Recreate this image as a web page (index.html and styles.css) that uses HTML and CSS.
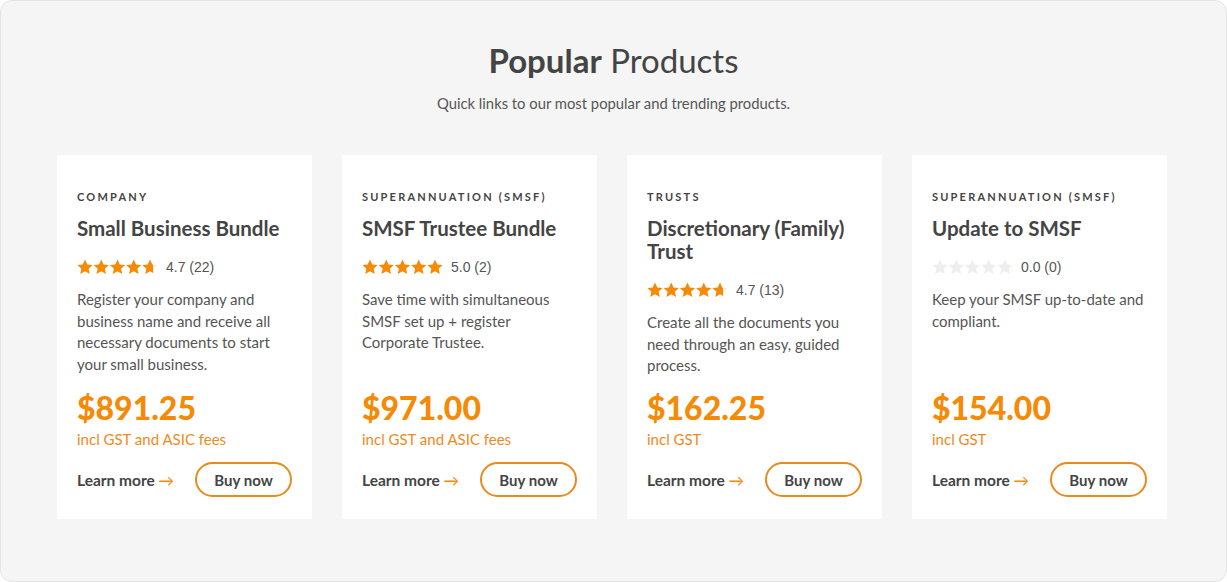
FILE: index.html
```html
<!DOCTYPE html>
<html lang="en">
<head>
<meta charset="utf-8">
<title>Popular Products</title>
<link rel="stylesheet" href="styles.css">
</head>
<body>
<svg class="defs" width="0" height="0" aria-hidden="true">
  <defs>
    <polygon id="star" points="8,0.6 10.3,5.5 15.6,6.1 11.6,9.7 12.8,15 8,12.3 3.2,15 4.4,9.7 0.4,6.1 5.7,5.5"/>
    <linearGradient id="part70" x1="0" x2="1" y1="0" y2="0">
      <stop offset="0.7" stop-color="#f58a07"/>
      <stop offset="0.7" stop-color="#eeeeee"/>
    </linearGradient>
  </defs>
</svg>
<section class="panel">
  <h2 class="heading"><strong>Popular</strong> Products</h2>
  <p class="sub">Quick links to our most popular and trending products.</p>
  <div class="grid">
    <article class="card">
      <div class="cat">Company</div>
      <h3 class="title">Small Business Bundle</h3>
      <div class="rating">
        <svg class="stars" width="81" height="16" viewBox="0 0 81 16"><use href="#star" class="on"/><use href="#star" x="16.25" class="on"/><use href="#star" x="32.5" class="on"/><use href="#star" x="48.75" class="on"/><use href="#star" x="65" fill="url(#part70)"/></svg>
        <span class="score">4.7 (22)</span>
      </div>
      <p class="desc">Register your company and business name and receive all necessary documents to start your small business.</p>
      <div class="price">$891.25</div>
      <div class="note">incl GST and ASIC fees</div>
      <div class="actions"><a class="learn" href="#">Learn more <span class="arrow">→</span></a><a class="buy" href="#">Buy now</a></div>
    </article>
    <article class="card">
      <div class="cat">Superannuation (SMSF)</div>
      <h3 class="title">SMSF Trustee Bundle</h3>
      <div class="rating">
        <svg class="stars" width="81" height="16" viewBox="0 0 81 16"><use href="#star" class="on"/><use href="#star" x="16.25" class="on"/><use href="#star" x="32.5" class="on"/><use href="#star" x="48.75" class="on"/><use href="#star" x="65" class="on"/></svg>
        <span class="score">5.0 (2)</span>
      </div>
      <p class="desc">Save time with simultaneous SMSF set up + register Corporate Trustee.</p>
      <div class="price">$971.00</div>
      <div class="note">incl GST and ASIC fees</div>
      <div class="actions"><a class="learn" href="#">Learn more <span class="arrow">→</span></a><a class="buy" href="#">Buy now</a></div>
    </article>
    <article class="card">
      <div class="cat">Trusts</div>
      <h3 class="title">Discretionary (Family) Trust</h3>
      <div class="rating">
        <svg class="stars" width="81" height="16" viewBox="0 0 81 16"><use href="#star" class="on"/><use href="#star" x="16.25" class="on"/><use href="#star" x="32.5" class="on"/><use href="#star" x="48.75" class="on"/><use href="#star" x="65" fill="url(#part70)"/></svg>
        <span class="score">4.7 (13)</span>
      </div>
      <p class="desc">Create all the documents you need through an easy, guided process.</p>
      <div class="price">$162.25</div>
      <div class="note">incl GST</div>
      <div class="actions"><a class="learn" href="#">Learn more <span class="arrow">→</span></a><a class="buy" href="#">Buy now</a></div>
    </article>
    <article class="card">
      <div class="cat">Superannuation (SMSF)</div>
      <h3 class="title">Update to SMSF</h3>
      <div class="rating">
        <svg class="stars" width="81" height="16" viewBox="0 0 81 16"><use href="#star" class="off"/><use href="#star" x="16.25" class="off"/><use href="#star" x="32.5" class="off"/><use href="#star" x="48.75" class="off"/><use href="#star" x="65" class="off"/></svg>
        <span class="score">0.0 (0)</span>
      </div>
      <p class="desc">Keep your SMSF up-to-date and compliant.</p>
      <div class="price">$154.00</div>
      <div class="note">incl GST</div>
      <div class="actions"><a class="learn" href="#">Learn more <span class="arrow">→</span></a><a class="buy" href="#">Buy now</a></div>
    </article>
  </div>
</section>
</body>
</html>
```
FILE: styles.css
```css
* { box-sizing: border-box; }
html, body { margin: 0; background: #ffffff; }
body { font-family: Lato, "Open Sans", sans-serif; color: #444; }
.defs { position: absolute; width: 0; height: 0; overflow: hidden; }
.panel {
  height: 582px;
  background: #f5f5f5;
  border: 1px solid #e4e4e4;
  border-radius: 12px;
  padding: 38px 56px 0 56px;
}
.heading {
  margin: 0;
  text-align: center;
  font-size: 33px;
  font-weight: 400;
  color: #444;
  line-height: 42px;
}
.heading strong { font-weight: 700; }
.sub {
  margin: 12px 0 0;
  text-align: center;
  font-size: 14.8px;
  color: #555;
  line-height: 20px;
}
.grid {
  display: grid;
  grid-template-columns: repeat(4, 255px);
  gap: 30px;
  margin-top: 42px;
}
.card {
  background: #fff;
  height: 364px;
  padding: 35px 20px 22px;
  display: flex;
  flex-direction: column;
}
.cat {
  font-size: 11px;
  font-weight: 700;
  letter-spacing: 2.2px;
  text-transform: uppercase;
  color: #444;
  line-height: 14px;
}
.title {
  margin: 13px 0 0;
  font-size: 20.5px;
  font-weight: 700;
  line-height: 23px;
  color: #444;
}
.rating {
  display: flex;
  align-items: center;
  margin-top: 18px;
  height: 18px;
}
.stars { display: block; }
.stars .on { fill: #f58a07; }
.stars .off { fill: #eeeeee; }
.score {
  margin-left: 8px;
  font-family: "Liberation Sans", Arial, sans-serif;
  font-size: 14px;
  color: #555;
}
.desc {
  margin: 13px 0 0;
  font-size: 15px;
  line-height: 21.5px;
  color: #555;
}
.price {
  margin-top: auto;
  font-size: 32px;
  font-weight: 900;
  color: #f58a07;
  line-height: 36px;
}
.note {
  font-size: 15px;
  color: #f08a1c;
  line-height: 20px;
  margin-top: 3px;
}
.actions {
  display: flex;
  align-items: center;
  justify-content: space-between;
  margin-top: 13px;
}
.learn {
  font-size: 15.5px;
  font-weight: 700;
  color: #444;
  text-decoration: none;
}
.arrow { color: #f58a07; font-weight: 400; }
.buy {
  width: 97px;
  height: 35px;
  border: 2px solid #e88a1e;
  border-radius: 18px;
  display: flex;
  align-items: center;
  justify-content: center;
  font-size: 15px;
  font-weight: 700;
  color: #444;
  text-decoration: none;
}
```
